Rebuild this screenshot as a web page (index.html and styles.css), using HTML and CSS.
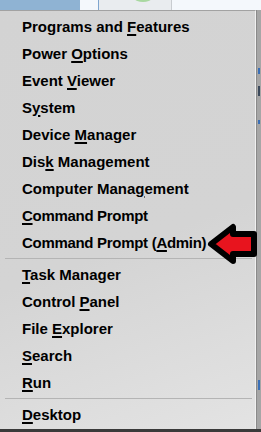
FILE: index.html
```html
<!DOCTYPE html>
<html lang="en">
<head>
    <title>Quick Link Menu</title>
    <meta charset="UTF-8" />
    <link rel="stylesheet" href="styles.css">
</head>
<body>
<div class="screen">
    <!-- strip of the desktop showing above the menu -->
    <div class="topstrip">
        <div class="strip-blue"></div>
        <div class="strip-pale"></div>
        <div class="strip-tile"><span class="blob"></span></div>
        <div class="strip-pale grow"></div>
    </div>

    <div class="row">
        <div class="menu">
            <div class="item">Programs and <u>F</u>eatures</div>
            <div class="item">Power <u>O</u>ptions</div>
            <div class="item">Event <u>V</u>iewer</div>
            <div class="item">S<u>y</u>stem</div>
            <div class="item">Device <u>M</u>anager</div>
            <div class="item">Dis<u>k</u> Management</div>
            <div class="item">Computer Mana<u>g</u>ement</div>
            <div class="item tight"><u>C</u>ommand Prompt</div>
            <div class="item tight">Command Prompt (<u>A</u>dmin)</div>
            <div class="sep"></div>
            <div class="item"><u>T</u>ask Manager</div>
            <div class="item">Control <u>P</u>anel</div>
            <div class="item">File <u>E</u>xplorer</div>
            <div class="item"><u>S</u>earch</div>
            <div class="item"><u>R</u>un</div>
            <div class="sep"></div>
            <div class="item"><u>D</u>esktop</div>
        </div>
        <div class="edge">
            <span class="mark m1"></span>
            <span class="mark m2"></span>
            <span class="mark m3"></span>
            <span class="mark m4"></span>
        </div>
    </div>
    <div class="bottom"></div>

    <!-- red pointer drawn over the menu -->
    <svg class="arrow" width="56" height="46" viewBox="0 0 56 46">
        <polygon points="5,22 27,5 27,12 48,12 48,32 27,32 27,39"
                 fill="#e8141e" stroke="#000" stroke-width="6" stroke-linejoin="round"/>
    </svg>
</div>
</body>
</html>
```

FILE: styles.css
```css
body {
    margin: 0;
    padding: 0;
    background-color: #9a9a9a;
    font-family: 'Liberation Sans', Arial, sans-serif;
}

.screen {
    position: relative;
    width: 261px;
    height: 432px;
    overflow: hidden;
    display: flex;
    flex-direction: column;
}

.topstrip {
    display: flex;
    height: 10px;
}

.strip-blue {
    width: 80px;
    background-color: #8fb3d3;
}

.strip-pale {
    width: 18px;
    background-color: #f4f8fc;
}

.grow {
    flex: 1;
}

.strip-tile {
    position: relative;
    width: 72px;
    background-color: #e9ecef;
    border-left: 1px solid #7fa6cf;
    border-right: 1px solid #c8ccd0;
}

.blob {
    position: absolute;
    left: 36px;
    top: -4px;
    width: 16px;
    height: 6px;
    border-radius: 50%;
    background-color: #a8d8a0;
}

.row {
    display: flex;
    height: 419px;
}

.menu {
    width: 256px;
    border-top: 1px solid #a2a2a2;
    border-right: 1px solid #f0f0f0;
    padding-top: 2px;
    background: linear-gradient(160deg, #d3d3d3 0%, #d4d4d4 55%, #e3e3e3 100%);
    box-sizing: border-box;
}

.edge {
    position: relative;
    flex: 1;
    background-color: #a6a6a6;
    border-left: 1px solid #8a8a8a;
}

.mark {
    position: absolute;
    left: 1px;
    width: 2px;
    background-color: #3a70b8;
}

.m1 { top: 58px; height: 6px; }
.m2 { top: 76px; height: 10px; background-color: #3c4a5c; }
.m3 { top: 110px; height: 4px; }
.m4 { top: 370px; height: 10px; }

.item {
    height: 27px;
    line-height: 27px;
    padding-left: 22px;
    font-size: 15px;
    font-weight: bold;
    color: #000;
    white-space: nowrap;
}

.tight {
    letter-spacing: -0.3px;
}

.item u {
    text-decoration-thickness: 2px;
    text-underline-offset: 2px;
}

.sep {
    height: 5px;
    margin: 0 3px 0 5px;
    position: relative;
}

.sep::after {
    content: "";
    position: absolute;
    left: 0;
    right: 0;
    top: 2px;
    height: 1px;
    background-color: #b4b4b4;
}

.bottom {
    flex: 1;
    background-color: #3a3a3a;
}

.arrow {
    position: absolute;
    left: 206px;
    top: 222px;
}
```
